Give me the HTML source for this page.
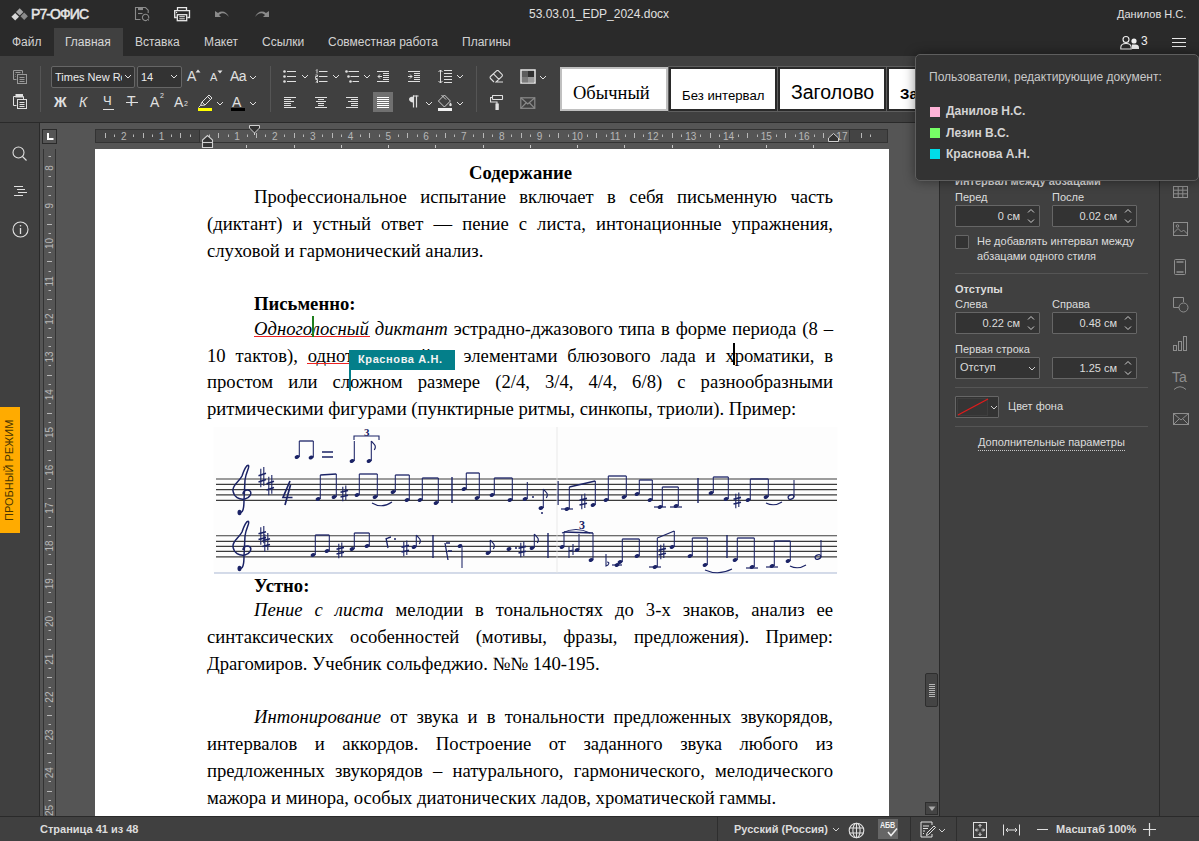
<!DOCTYPE html>
<html><head><meta charset="utf-8">
<style>
*{box-sizing:border-box;margin:0;padding:0}
html,body{width:1199px;height:841px;overflow:hidden;background:#555;font-family:"Liberation Sans",sans-serif;}
.abs{position:absolute}
#hdr{position:absolute;left:0;top:0;width:1199px;height:56px;background:#2a2a2a}
#tb{position:absolute;left:0;top:56px;width:1199px;height:67px;background:#404040;border-bottom:1px solid #2a2a2a}
#lside{position:absolute;left:0;top:123px;width:40px;height:694px;background:#404040;border-right:1px solid #2a2a2a}
#canvas{position:absolute;left:40px;top:123px;width:899px;height:694px;background:#555}
#rpanel{position:absolute;left:939px;top:123px;width:220px;height:694px;background:#404040;border-left:1px solid #2a2a2a}
#rpanel>*{margin-left:-1px}
#rside{position:absolute;left:1159px;top:123px;width:40px;height:694px;background:#404040;border-left:1px solid #2a2a2a}
#rside>*{margin-left:-1px}
#status{position:absolute;left:0;top:816px;width:1199px;height:25px;background:#404040;border-top:1px solid #2a2a2a}
#page{position:absolute;left:95px;top:149px;width:794px;height:667px;background:#fff;overflow:hidden}
.t{position:absolute;white-space:nowrap}
.ht{color:rgba(255,255,255,.8);font-size:12px}
.doc{font-family:"Liberation Serif",serif;font-size:18.67px;color:#000;position:absolute;white-space:nowrap;line-height:27px}
.j{text-align:justify;text-align-last:justify;width:626px;white-space:normal}
</style></head><body>
<div id="hdr">
<svg class="abs" style="left:0;top:0" width="30" height="28" viewBox="0 0 30 28">
<path d="M19.7 8.2l3.7 3.7l-3.7 3.7l-3.7-3.7z" fill="#a8a8a8"/>
<path d="M15.2 13l3.8 3.8l-3.8 3.8l-3.8-3.8z" fill="#d8d8d8"/>
<path d="M24.2 12.6l3.7 3.7l-3.7 3.7l-3.7-3.7z" fill="#8a8a8a"/>
</svg>
<div class="t" style="left:31px;top:6px;font-size:14px;color:#e6e6e6;letter-spacing:-0.9px;-webkit-text-stroke:0.5px #e6e6e6">Р7-ОФИС</div>
<svg class="abs" style="left:130px;top:4px" width="22" height="20" viewBox="130 4 22 20" fill="none" stroke="#8a8a8a" stroke-width="1.1">
<path d="M140.5 19.5H135.5V7.5H145.5L148.2 10.2V13"/><path d="M138 13.5H142.5"/><rect x="138" y="7.5" width="5" height="2.6" fill="#8a8a8a" stroke="none"/>
<path d="M148.6 18.5A3.2 3.2 0 1 0 147 20.3"/><path d="M146.5 19.5L149 21L148.5 18.5z" fill="#8a8a8a" stroke="none"/>
</svg>
<svg class="abs" style="left:172px;top:5px" width="20" height="18" viewBox="172 5 20 18" fill="none" stroke="#e8e8e8" stroke-width="1.3">
<path d="M177.5 10.2V7.7H186.5V10.2"/><path d="M176.8 17.5H174.7V10.7H189.5V17.5H187.3"/><rect x="177.3" y="14.7" width="9.4" height="6" fill="#2a2a2a"/><path d="M179.3 16.7H184.8M179.3 18.8H184.8" stroke-width="1"/><circle cx="176.6" cy="12.5" r="0.7" fill="#e8e8e8" stroke="none"/>
</svg>
<svg class="abs" style="left:214px;top:10px" width="16" height="9" viewBox="0 0 16 9"><path d="M1 1v6h6L5 5c3-3 7-2 10 2c-2-5-7-7-11-4z" fill="#8a8a8a"/></svg>
<svg class="abs" style="left:254px;top:10px" width="16" height="9" viewBox="0 0 16 9"><path d="M15 1v6H9l2-2C8 2 4 3 1 7c2-5 7-7 11-4z" fill="#8a8a8a"/></svg>
<div class="t ht" style="left:529px;top:7px;color:#e0e0e0">53.03.01_EDP_2024.docx</div>
<div class="t ht" style="left:1117px;top:8px;font-size:11px;color:#e0e0e0">Данилов Н.С.</div>
<div class="abs" style="left:54px;top:28px;width:69px;height:28px;background:#404040"></div>
<div class="t ht" style="left:12px;top:35px">Файл</div>
<div class="t ht" style="left:65px;top:35px">Главная</div>
<div class="t ht" style="left:135px;top:35px">Вставка</div>
<div class="t ht" style="left:204px;top:35px">Макет</div>
<div class="t ht" style="left:262px;top:35px">Ссылки</div>
<div class="t ht" style="left:328px;top:35px">Совместная работа</div>
<div class="t ht" style="left:462px;top:35px">Плагины</div>
<svg class="abs" style="left:1120px;top:35px" width="20" height="15" viewBox="0 0 20 15">
<circle cx="6" cy="4.5" r="3" fill="none" stroke="#f0f0f0" stroke-width="1.1"/>
<path d="M0.8 14v-1.5c0-2.5 2.3-4 5.2-4s5.2 1.5 5.2 4V14z" fill="none" stroke="#f0f0f0" stroke-width="1.1"/>
<circle cx="14" cy="6" r="2.6" fill="#f0f0f0"/>
<path d="M12 14V9.5h3.5c2 0 3.5 1.2 3.5 3V14z" fill="#f0f0f0"/>
</svg>
<div class="t ht" style="left:1141px;top:34px;color:#f0f0f0">3</div>
<svg class="abs" style="left:1172px;top:37px" width="15" height="11" viewBox="0 0 15 11"><path d="M0 1.5h14M0 5.5h14M0 9.5h14" stroke="#e8e8e8" stroke-width="1.2"/></svg>
</div>
<div id="tb">
<svg class="abs" style="left:13px;top:14px" width="15" height="14" viewBox="0 0 15 14" fill="none" stroke="#9a9a9a" stroke-width="1">
<path d="M3.5 9.5H0.5V0.5H9.5V3.5"/><path d="M2.5 2.5H7.5M2.5 4.5H3M2.5 6.5H3"/><rect x="4.5" y="4.5" width="9" height="9" fill="#404040"/><path d="M6.5 7.5H11.5M6.5 9.5H11.5M6.5 11.5H11.5"/>
</svg>
<svg class="abs" style="left:13px;top:38px" width="15" height="16" viewBox="0 0 15 16" fill="none" stroke="#e0e0e0" stroke-width="1">
<path d="M3 2.5H0.5V11.5H3.5"/><path d="M10.5 5.5V2.5H9.5"/><rect x="3" y="0.5" width="6.5" height="2.5" fill="#e0e0e0"/><rect x="4.5" y="5.5" width="9" height="9" fill="#404040"/><path d="M6.5 8.5H11.5M6.5 10.5H11.5M6.5 12.5H11.5"/>
</svg>
<div class="abs" style="left:40px;top:10px;width:1px;height:46px;background:#555"></div>
<div class="abs" style="left:51px;top:10px;width:84px;height:22px;background:#333;border:1px solid #666;border-radius:2px;overflow:hidden"><div class="t" style="left:3px;top:4px;font-size:11px;color:#ececec;width:67px;overflow:hidden">Times New Roman</div></div>
<svg class="abs" style="left:124px;top:18px" width="8" height="5" viewBox="0 0 8 5"><path d="M1 1l3 3l3-3" fill="none" stroke="#e0e0e0" stroke-width="1"/></svg>
<div class="abs" style="left:137px;top:10px;width:45px;height:22px;background:#333;border:1px solid #666;border-radius:2px"><div class="t" style="left:3px;top:4px;font-size:11px;color:#ececec">14</div></div>
<svg class="abs" style="left:170px;top:18px" width="8" height="5" viewBox="0 0 8 5"><path d="M1 1l3 3l3-3" fill="none" stroke="#e0e0e0" stroke-width="1"/></svg>
<div class="t" style="left:187px;top:12px;font-size:14px;color:#e0e0e0">A</div>
<svg class="abs" style="left:195px;top:13px" width="6" height="4"><path d="M0.5 3.5L3 0.5L5.5 3.5z" fill="#e0e0e0"/></svg>
<div class="t" style="left:210px;top:15px;font-size:11px;color:#e0e0e0">A</div>
<svg class="abs" style="left:217px;top:14px" width="6" height="4"><path d="M0.5 0.5L3 3.5L5.5 0.5z" fill="#e0e0e0"/></svg>
<div class="t" style="left:230px;top:12px;font-size:14px;color:#e0e0e0;letter-spacing:-0.5px">Aa</div>
<svg class="abs" style="left:249px;top:19px" width="8" height="5" viewBox="0 0 8 5"><path d="M1 1l3 3l3-3" fill="none" stroke="#e0e0e0" stroke-width="1"/></svg>
<div class="abs" style="left:270px;top:10px;width:1px;height:46px;background:#555"></div>
<div class="t" style="left:54px;top:38px;font-size:14px;font-weight:bold;color:#e0e0e0">Ж</div>
<div class="t" style="left:79px;top:38px;font-size:14px;font-style:italic;color:#e0e0e0">К</div>
<div class="t" style="left:103px;top:37px;font-size:13px;color:#e0e0e0">Ч</div>
<div class="abs" style="left:103px;top:53px;width:11px;height:1px;background:#e0e0e0"></div>
<div class="t" style="left:127px;top:37px;font-size:14px;color:#e0e0e0">Т</div>
<div class="abs" style="left:126px;top:46px;width:12px;height:1px;background:#e0e0e0"></div>
<div class="t" style="left:150px;top:38px;font-size:14px;color:#e0e0e0">A</div>
<div class="t" style="left:160px;top:36px;font-size:7px;color:#e0e0e0">2</div>
<div class="t" style="left:174px;top:38px;font-size:14px;color:#e0e0e0">A</div>
<div class="t" style="left:184px;top:44px;font-size:7px;color:#e0e0e0">2</div>
<svg class="abs" style="left:198px;top:37px" width="16" height="15" viewBox="0 0 16 15" fill="none" stroke="#e0e0e0" stroke-width="1">
<path d="M2.5 12.5L4 9L11 2l3 3l-7 7z M4 9l3 3 M9.5 3.5l3 3"/><path d="M0.5 14.5l2-2" />
</svg>
<div class="abs" style="left:198px;top:52px;width:14px;height:3px;background:#ffff00"></div>
<svg class="abs" style="left:216px;top:45px" width="8" height="5" viewBox="0 0 8 5"><path d="M1 1l3 3l3-3" fill="none" stroke="#e0e0e0" stroke-width="1"/></svg>
<div class="t" style="left:232px;top:38px;font-size:14px;color:#e0e0e0">A</div>
<div class="abs" style="left:231px;top:52px;width:14px;height:3px;background:#000"></div>
<svg class="abs" style="left:249px;top:45px" width="8" height="5" viewBox="0 0 8 5"><path d="M1 1l3 3l3-3" fill="none" stroke="#e0e0e0" stroke-width="1"/></svg>
<svg class="abs" style="left:283px;top:13px" width="16" height="14" viewBox="0 0 16 14" fill="none" stroke="#e0e0e0" stroke-width="1"><path d="M4 2.5H13M4 7.5H13M4 12.5H13"/><circle cx="1.5" cy="2.5" r="1.3" fill="#e0e0e0" stroke="none"/><circle cx="1.5" cy="7.5" r="1.3" fill="#e0e0e0" stroke="none"/><circle cx="1.5" cy="12.5" r="1.3" fill="#e0e0e0" stroke="none"/></svg><svg class="abs" style="left:301px;top:18px" width="8" height="5" viewBox="0 0 8 5"><path d="M1 1l3 3l3-3" fill="none" stroke="#e0e0e0" stroke-width="1"/></svg><svg class="abs" style="left:315px;top:13px" width="16" height="14" viewBox="0 0 16 14" fill="none" stroke="#e0e0e0" stroke-width="1"><path d="M4 2.5H12.5M4 7.5H12.5M4 12.5H12.5"/><path d="M1 1.5L2 0.5V4.5M0.5 6H2.5V7.5H0.5V9.5H2.5M0.5 10.5H2.5V14H0.5M1 12.3H2.5" stroke-width="0.9"/></svg><svg class="abs" style="left:332px;top:18px" width="8" height="5" viewBox="0 0 8 5"><path d="M1 1l3 3l3-3" fill="none" stroke="#e0e0e0" stroke-width="1"/></svg><svg class="abs" style="left:345px;top:13px" width="16" height="14" viewBox="0 0 16 14" fill="none" stroke="#e0e0e0" stroke-width="1"><path d="M3.5 2.5H14M5.5 7.5H14M7.5 12.5H14"/><circle cx="1.5" cy="2.5" r="1.3" fill="#e0e0e0" stroke="none"/><circle cx="3.5" cy="7.5" r="1.3" fill="#e0e0e0" stroke="none"/><circle cx="5.5" cy="12.5" r="1.3" fill="#e0e0e0" stroke="none"/></svg><svg class="abs" style="left:363px;top:18px" width="8" height="5" viewBox="0 0 8 5"><path d="M1 1l3 3l3-3" fill="none" stroke="#e0e0e0" stroke-width="1"/></svg><svg class="abs" style="left:377px;top:14px" width="14" height="13" viewBox="0 0 14 13" fill="none" stroke="#e0e0e0" stroke-width="1">
<path d="M0 1.5H12M6 3.5H12M6 5.5H12M6 7.5H12M6 9.5H12M0 11.5H12M1 6.5H5M3 4.5L1 6.5L3 8.5"/></svg>
<svg class="abs" style="left:408px;top:14px" width="14" height="13" viewBox="0 0 14 13" fill="none" stroke="#e0e0e0" stroke-width="1">
<path d="M0 1.5H12M6 3.5H12M6 5.5H12M6 7.5H12M6 9.5H12M0 11.5H12M0 6.5H4M2 4.5L4 6.5L2 8.5"/></svg>
<svg class="abs" style="left:438px;top:13px" width="15" height="15" viewBox="0 0 15 15" fill="none" stroke="#e0e0e0" stroke-width="1">
<path d="M2.5 1V14M0.5 3L2.5 1L4.5 3M0.5 12L2.5 14L4.5 12M6 1.5H14M6 4.5H14M6 7.5H14M6 10.5H14M6 13.5H14" /></svg>
<svg class="abs" style="left:456px;top:18px" width="8" height="5" viewBox="0 0 8 5"><path d="M1 1l3 3l3-3" fill="none" stroke="#e0e0e0" stroke-width="1"/></svg>
<div class="abs" style="left:373px;top:36px;width:20px;height:20px;background:#707070"></div><svg class="abs" style="left:284px;top:40px" width="13" height="13" viewBox="0 0 13 13" fill="none" stroke="#e0e0e0" stroke-width="1"><path d="M0 1.5H12M0 3.5H7M0 5.5H10M0 7.5H7M0 9.5H7M0 11.5H12"/></svg>
<svg class="abs" style="left:315px;top:40px" width="13" height="13" viewBox="0 0 13 13" fill="none" stroke="#e0e0e0" stroke-width="1"><path d="M0 1.5H12M3 3.5H9M1 5.5H11M3 7.5H9M3 9.5H9M0 11.5H12"/></svg>
<svg class="abs" style="left:346px;top:40px" width="13" height="13" viewBox="0 0 13 13" fill="none" stroke="#e0e0e0" stroke-width="1"><path d="M0 1.5H12M5 3.5H12M2 5.5H12M5 7.5H12M5 9.5H12M0 11.5H12"/></svg>
<svg class="abs" style="left:377px;top:40px" width="13" height="13" viewBox="0 0 13 13" fill="none" stroke="#fff" stroke-width="1"><path d="M0 1.5H12M0 3.5H12M0 5.5H12M0 7.5H12M0 9.5H12M0 11.5H12"/></svg>
<svg class="abs" style="left:408px;top:39px" width="11" height="13" viewBox="0 0 11 13"><path d="M5 0.5H10.5V1.5H5C3 1.5 1 2.5 1 4.3C1 6.2 3 7.5 5 7.5z" fill="#e0e0e0"/><path d="M5.5 0.5V12.5M8.5 0.5V12.5" stroke="#e0e0e0" stroke-width="1.2"/></svg>
<svg class="abs" style="left:425px;top:45px" width="8" height="5" viewBox="0 0 8 5"><path d="M1 1l3 3l3-3" fill="none" stroke="#e0e0e0" stroke-width="1"/></svg>
<svg class="abs" style="left:437px;top:38px" width="16" height="14" viewBox="0 0 16 14" fill="none" stroke="#e0e0e0" stroke-width="0.9"><path d="M7.4 1L13.4 7L7.4 13L1.4 7z"/><path d="M4.5 1L9 5.5"/><path d="M13.5 8.5c-1.6 1.8-1.8 3.5 0 3.8c1.8-0.3 1.6-2 0-3.8z" fill="#e0e0e0" stroke="none"/></svg>
<div class="abs" style="left:438px;top:52px;width:14px;height:3px;background:#f0f0f0"></div>
<svg class="abs" style="left:456px;top:45px" width="8" height="5" viewBox="0 0 8 5"><path d="M1 1l3 3l3-3" fill="none" stroke="#e0e0e0" stroke-width="1"/></svg>
<div class="abs" style="left:476px;top:10px;width:1px;height:46px;background:#555"></div>
<svg class="abs" style="left:489px;top:14px" width="15" height="13" viewBox="0 0 15 13" fill="none" stroke="#e0e0e0" stroke-width="1.1">
<path d="M5 12L1.5 8.5a1.4 1.4 0 0 1 0-2L7.5 0.8a1.4 1.4 0 0 1 2 0L13 4.3a1.4 1.4 0 0 1 0 2L7 12H14M4.5 3.8L10 9.3"/></svg>
<svg class="abs" style="left:520px;top:13px" width="16" height="15" viewBox="0 0 16 15">
<rect x="1" y="1" width="14" height="13" fill="none" stroke="#e8e8e8" stroke-width="1.5"/>
<rect x="2" y="2" width="6" height="6" fill="#5c5c5c"/><rect x="8" y="2" width="6" height="6" fill="#303030"/>
<rect x="2" y="8" width="6" height="5.5" fill="#7a7a7a"/><rect x="8" y="8" width="6" height="5.5" fill="#9a9a9a"/></svg>
<svg class="abs" style="left:539px;top:19px" width="8" height="5" viewBox="0 0 8 5"><path d="M1 1l3 3l3-3" fill="none" stroke="#e0e0e0" stroke-width="1"/></svg>
<svg class="abs" style="left:490px;top:39px" width="14" height="15" viewBox="0 0 14 15" fill="none" stroke="#e0e0e0" stroke-width="1.1">
<rect x="2.5" y="0.5" width="10" height="4" rx="0.5"/><path d="M2.5 2.5H0.5V7H7V9"/><rect x="6" y="9" width="2.2" height="5.5" fill="#e0e0e0"/></svg>
<svg class="abs" style="left:520px;top:41px" width="16" height="12" viewBox="0 0 16 12" fill="none" stroke="#8a8a8a" stroke-width="1.2">
<rect x="0.8" y="0.8" width="14" height="10.5"/><path d="M0.8 0.8L7.8 7L14.8 0.8M0.8 11.3L6 6M14.8 11.3L9.6 6"/></svg>
<div class="abs" style="left:560px;top:11px;width:108px;height:44px;background:#c0c0c0"></div>
<div class="abs" style="left:562px;top:13px;width:104px;height:40px;background:#fff;overflow:hidden"><div class="t" style="left:11px;top:14px;font-family:'Liberation Serif',serif;font-size:18.5px;color:#000">Обычный</div></div>
<div class="abs" style="left:668px;top:10px;width:330px;height:46px;background:#5e5e5e"></div>
<div class="abs" style="left:669px;top:11px;width:108px;height:44px;background:#2a2a2a"></div>
<div class="abs" style="left:778px;top:11px;width:108px;height:44px;background:#2a2a2a"></div>
<div class="abs" style="left:887px;top:11px;width:108px;height:44px;background:#2a2a2a"></div>
<div class="abs" style="left:671px;top:13px;width:104px;height:40px;background:#fff;overflow:hidden"><div class="t" style="left:11px;top:19px;font-size:13.2px;color:#000">Без интервал</div></div>
<div class="abs" style="left:780px;top:13px;width:104px;height:40px;background:#fff;overflow:hidden"><div class="t" style="left:11px;top:12px;font-size:19.5px;color:#000;width:83px;overflow:hidden">Заголовок 1</div></div>
<div class="abs" style="left:889px;top:13px;width:104px;height:40px;background:#fff;overflow:hidden"><div class="t" style="left:11px;top:15.7px;font-size:15px;font-weight:bold;color:#000">Заголовок 2</div></div>
</div>
<div id="lside">
<svg class="abs" style="left:11px;top:22px" width="18" height="18" viewBox="0 0 18 18" fill="none" stroke="#e0e0e0" stroke-width="1.1">
<circle cx="7.5" cy="7.5" r="5.5"/><path d="M11.5 11.5L15.5 15.5"/></svg>
<svg class="abs" style="left:12px;top:60px" width="16" height="14" viewBox="0 0 16 14" fill="none" stroke="#e0e0e0" stroke-width="1">
<path d="M2 3.5H11M5 6.5H13M6 9.5H15M2 12.5H11"/></svg>
<svg class="abs" style="left:11px;top:97px" width="19" height="19" viewBox="0 0 19 19" fill="none" stroke="#e0e0e0" stroke-width="1.1">
<circle cx="9.5" cy="9.5" r="7.5"/><path d="M9.5 8V14" stroke-width="1.3"/><circle cx="9.5" cy="5.8" r="0.8" fill="#e0e0e0" stroke="none"/></svg>
<div class="abs" style="left:0;top:284px;width:20px;height:126px;background:#ffab00"></div>
<div class="t" style="left:-41px;top:341px;width:100px;height:14px;font-size:11px;color:#4a3500;transform:rotate(-90deg);text-align:center;line-height:14px">ПРОБНЫЙ РЕЖИМ</div>
</div>
<div id="canvas">
<div class="abs" style="left:885px;top:550px;width:13px;height:34px;background:#444;border:1px solid #2e2e2e;border-radius:2px"></div>
<svg class="abs" style="left:889px;top:561px" width="6" height="14"><path d="M0 0.5H6M0 2.5H6M0 4.5H6M0 6.5H6M0 8.5H6M0 10.5H6M0 12.5H6" stroke="#b4b4b4" stroke-width="1"/></svg>
<div class="abs" style="left:885px;top:679px;width:13px;height:13px;background:#444;border:1px solid #2e2e2e"></div>
<svg class="abs" style="left:888px;top:683px" width="8" height="6"><path d="M0.5 0.5H7.5L4 5z" fill="#aaa"/></svg>
<div class="abs" style="left:2px;top:6px;width:15px;height:15px;border:1px solid #2a2a2a;background:#555"></div><svg class="abs" style="left:6px;top:10px" width="9" height="9"><path d="M2 0V6H7.5" fill="none" stroke="#fff" stroke-width="2"/></svg><div class="abs" style="left:55px;top:6px;width:793px;height:14px;background:#444;border:1px solid #333"></div><div class="abs" style="left:159px;top:7px;width:651px;height:12px;background:#555;border-left:1px solid #333;border-right:1px solid #333"></div><svg class="abs" style="left:0;top:0" width="899" height="40"><text x="83.7" y="17" font-family="Liberation Sans" font-size="10" fill="#b8b8b8" text-anchor="middle">2</text><text x="121.5" y="17" font-family="Liberation Sans" font-size="10" fill="#b8b8b8" text-anchor="middle">1</text><text x="197.1" y="17" font-family="Liberation Sans" font-size="10" fill="#b8b8b8" text-anchor="middle">1</text><text x="234.9" y="17" font-family="Liberation Sans" font-size="10" fill="#b8b8b8" text-anchor="middle">2</text><text x="272.7" y="17" font-family="Liberation Sans" font-size="10" fill="#b8b8b8" text-anchor="middle">3</text><text x="310.5" y="17" font-family="Liberation Sans" font-size="10" fill="#b8b8b8" text-anchor="middle">4</text><text x="348.3" y="17" font-family="Liberation Sans" font-size="10" fill="#b8b8b8" text-anchor="middle">5</text><text x="386.1" y="17" font-family="Liberation Sans" font-size="10" fill="#b8b8b8" text-anchor="middle">6</text><text x="423.9" y="17" font-family="Liberation Sans" font-size="10" fill="#b8b8b8" text-anchor="middle">7</text><text x="461.7" y="17" font-family="Liberation Sans" font-size="10" fill="#b8b8b8" text-anchor="middle">8</text><text x="499.5" y="17" font-family="Liberation Sans" font-size="10" fill="#b8b8b8" text-anchor="middle">9</text><text x="537.3" y="17" font-family="Liberation Sans" font-size="10" fill="#b8b8b8" text-anchor="middle">10</text><text x="575.1" y="17" font-family="Liberation Sans" font-size="10" fill="#b8b8b8" text-anchor="middle">11</text><text x="612.9" y="17" font-family="Liberation Sans" font-size="10" fill="#b8b8b8" text-anchor="middle">12</text><text x="650.7" y="17" font-family="Liberation Sans" font-size="10" fill="#b8b8b8" text-anchor="middle">13</text><text x="688.5" y="17" font-family="Liberation Sans" font-size="10" fill="#b8b8b8" text-anchor="middle">14</text><text x="726.3" y="17" font-family="Liberation Sans" font-size="10" fill="#b8b8b8" text-anchor="middle">15</text><text x="764.1" y="17" font-family="Liberation Sans" font-size="10" fill="#b8b8b8" text-anchor="middle">16</text><text x="801.9" y="17" font-family="Liberation Sans" font-size="10" fill="#b8b8b8" text-anchor="middle">17</text><path d="M65.5 10V15M74.5 11.5V14M93.5 11.5V14M103.5 10V15M112.5 11.5V14M131.5 11.5V14M140.5 10V15M150.5 11.5V14M169.5 11.5V14M178.5 10V15M188.5 11.5V14M207.5 11.5V14M216.5 10V15M225.5 11.5V14M244.5 11.5V14M254.5 10V15M263.5 11.5V14M282.5 11.5V14M292.5 10V15M301.5 11.5V14M320.5 11.5V14M329.5 10V15M339.5 11.5V14M358.5 11.5V14M367.5 10V15M377.5 11.5V14M396.5 11.5V14M405.5 10V15M414.5 11.5V14M433.5 11.5V14M443.5 10V15M452.5 11.5V14M471.5 11.5V14M481.5 10V15M490.5 11.5V14M509.5 11.5V14M518.5 10V15M528.5 11.5V14M547.5 11.5V14M556.5 10V15M566.5 11.5V14M585.5 11.5V14M594.5 10V15M603.5 11.5V14M622.5 11.5V14M632.5 10V15M641.5 11.5V14M660.5 11.5V14M670.5 10V15M679.5 11.5V14M698.5 11.5V14M707.5 10V15M717.5 11.5V14M736.5 11.5V14M745.5 10V15M755.5 11.5V14M774.5 11.5V14M783.5 10V15M792.5 11.5V14M821.5 10V15M830.5 11.5V14" stroke="#b8b8b8" stroke-width="1"/><path d="M206.5 22V25M254.5 22V25M301.5 22V25M348.5 22V25M395.5 22V25M443.5 22V25M490.5 22V25M537.5 22V25M584.5 22V25M632.5 22V25M679.5 22V25M726.5 22V25M773.5 22V25" stroke="#c8c8c8" stroke-width="1"/></svg><svg class="abs" style="left:161px;top:11px" width="13" height="15" viewBox="0 0 13 15"><path d="M1.5 13.5V6L6.5 1.5L11.5 6V13.5Z" fill="#333" stroke="#d0d0d0" stroke-width="1.1"/><path d="M1.5 8.5H11.5" stroke="#d0d0d0" stroke-width="1.1"/></svg><svg class="abs" style="left:209px;top:2px" width="11" height="11" viewBox="0 0 11 11"><path d="M0.5 0.5H10.5V3L5.5 8L0.5 3Z" fill="#333" stroke="#d0d0d0" stroke-width="1"/><path d="M5.5 8V10" stroke="#d0d0d0"/></svg><svg class="abs" style="left:788px;top:10px" width="11" height="9" viewBox="0 0 11 9"><path d="M0.5 8.5V5L5.5 0.5L10.5 5V8.5Z" fill="#333" stroke="#d0d0d0" stroke-width="1"/></svg><div class="abs" style="left:3px;top:26px;width:13px;height:700px;background:#555;border-left:1px solid #333;border-right:1px solid #333"></div><svg class="abs" style="left:0;top:0" width="40" height="693"><text x="0" y="0" transform="translate(13.0 44.9) rotate(-90)" font-family="Liberation Sans" font-size="10" fill="#b8b8b8" text-anchor="middle">8</text><text x="0" y="0" transform="translate(13.0 82.7) rotate(-90)" font-family="Liberation Sans" font-size="10" fill="#b8b8b8" text-anchor="middle">9</text><text x="0" y="0" transform="translate(13.0 120.5) rotate(-90)" font-family="Liberation Sans" font-size="10" fill="#b8b8b8" text-anchor="middle">10</text><text x="0" y="0" transform="translate(13.0 158.3) rotate(-90)" font-family="Liberation Sans" font-size="10" fill="#b8b8b8" text-anchor="middle">11</text><text x="0" y="0" transform="translate(13.0 196.1) rotate(-90)" font-family="Liberation Sans" font-size="10" fill="#b8b8b8" text-anchor="middle">12</text><text x="0" y="0" transform="translate(13.0 233.9) rotate(-90)" font-family="Liberation Sans" font-size="10" fill="#b8b8b8" text-anchor="middle">13</text><text x="0" y="0" transform="translate(13.0 271.7) rotate(-90)" font-family="Liberation Sans" font-size="10" fill="#b8b8b8" text-anchor="middle">14</text><text x="0" y="0" transform="translate(13.0 309.5) rotate(-90)" font-family="Liberation Sans" font-size="10" fill="#b8b8b8" text-anchor="middle">15</text><text x="0" y="0" transform="translate(13.0 347.3) rotate(-90)" font-family="Liberation Sans" font-size="10" fill="#b8b8b8" text-anchor="middle">16</text><text x="0" y="0" transform="translate(13.0 385.1) rotate(-90)" font-family="Liberation Sans" font-size="10" fill="#b8b8b8" text-anchor="middle">17</text><text x="0" y="0" transform="translate(13.0 422.9) rotate(-90)" font-family="Liberation Sans" font-size="10" fill="#b8b8b8" text-anchor="middle">18</text><text x="0" y="0" transform="translate(13.0 460.7) rotate(-90)" font-family="Liberation Sans" font-size="10" fill="#b8b8b8" text-anchor="middle">19</text><text x="0" y="0" transform="translate(13.0 498.5) rotate(-90)" font-family="Liberation Sans" font-size="10" fill="#b8b8b8" text-anchor="middle">20</text><text x="0" y="0" transform="translate(13.0 536.3) rotate(-90)" font-family="Liberation Sans" font-size="10" fill="#b8b8b8" text-anchor="middle">21</text><text x="0" y="0" transform="translate(13.0 574.1) rotate(-90)" font-family="Liberation Sans" font-size="10" fill="#b8b8b8" text-anchor="middle">22</text><text x="0" y="0" transform="translate(13.0 611.9) rotate(-90)" font-family="Liberation Sans" font-size="10" fill="#b8b8b8" text-anchor="middle">23</text><text x="0" y="0" transform="translate(13.0 649.7) rotate(-90)" font-family="Liberation Sans" font-size="10" fill="#b8b8b8" text-anchor="middle">24</text><text x="0" y="0" transform="translate(13.0 687.5) rotate(-90)" font-family="Liberation Sans" font-size="10" fill="#b8b8b8" text-anchor="middle">25</text><path d="M8.5 53.5H11M7 63.5H12M8.5 72.5H11M8.5 91.5H11M7 101.5H12M8.5 110.5H11M8.5 129.5H11M7 138.5H12M8.5 148.5H11M8.5 167.5H11M7 176.5H12M8.5 186.5H11M8.5 205.5H11M7 214.5H12M8.5 223.5H11M8.5 242.5H11M7 252.5H12M8.5 261.5H11M8.5 280.5H11M7 290.5H12M8.5 299.5H11M8.5 318.5H11M7 327.5H12M8.5 337.5H11M8.5 356.5H11M7 365.5H12M8.5 375.5H11M8.5 394.5H11M7 403.5H12M8.5 412.5H11M8.5 431.5H11M7 441.5H12M8.5 450.5H11M8.5 469.5H11M7 479.5H12M8.5 488.5H11M8.5 507.5H11M7 516.5H12M8.5 526.5H11M8.5 545.5H11M7 554.5H12M8.5 564.5H11M8.5 583.5H11M7 592.5H12M8.5 601.5H11M8.5 620.5H11M7 630.5H12M8.5 639.5H11M8.5 658.5H11M7 668.5H12M8.5 677.5H11M8.5 33.5H11" stroke="#b8b8b8" stroke-width="1"/></svg></div>
<div id="rpanel">
<div class="t" style="left:16px;top:51.8px;font-size:11px;font-weight:bold;color:#dcdcdc;">Интервал между абзацами</div>
<div class="t" style="left:16px;top:68.4px;font-size:11px;color:#dcdcdc;">Перед</div>
<div class="t" style="left:113px;top:68.4px;font-size:11px;color:#dcdcdc;">После</div>
<div class="abs" style="left:16px;top:82px;width:85px;height:22px;background:#333;border:1px solid #666;border-radius:1px"></div>
<div class="t" style="left:15px;top:87px;width:66px;text-align:right;font-size:11px;color:#dcdcdc">0 см</div>
<svg class="abs" style="left:88px;top:86px" width="8" height="14" viewBox="0 0 8 14"><path d="M1 3.5L4 0.5L7 3.5M1 10.5L4 13.5L7 10.5" fill="none" stroke="#d0d0d0" stroke-width="1"/></svg>
<div class="abs" style="left:113px;top:82px;width:85px;height:22px;background:#333;border:1px solid #666;border-radius:1px"></div>
<div class="t" style="left:112px;top:87px;width:66px;text-align:right;font-size:11px;color:#dcdcdc">0.02 см</div>
<svg class="abs" style="left:185px;top:86px" width="8" height="14" viewBox="0 0 8 14"><path d="M1 3.5L4 0.5L7 3.5M1 10.5L4 13.5L7 10.5" fill="none" stroke="#d0d0d0" stroke-width="1"/></svg>
<div class="abs" style="left:16px;top:112px;width:14px;height:14px;background:#333;border:1px solid #666;border-radius:1px"></div>
<div class="t" style="left:38px;top:112.4px;font-size:11px;color:#dcdcdc;">Не добавлять интервал между</div>
<div class="t" style="left:38px;top:127.1px;font-size:11px;color:#dcdcdc;">абзацами одного стиля</div>
<div class="abs" style="left:16px;top:150px;width:193px;height:1px;background:#555"></div>
<div class="t" style="left:16px;top:159.8px;font-size:11px;font-weight:bold;color:#dcdcdc;">Отступы</div>
<div class="t" style="left:16px;top:174.5px;font-size:11px;color:#dcdcdc;">Слева</div>
<div class="t" style="left:113px;top:174.5px;font-size:11px;color:#dcdcdc;">Справа</div>
<div class="abs" style="left:16px;top:189px;width:85px;height:22px;background:#333;border:1px solid #666;border-radius:1px"></div>
<div class="t" style="left:15px;top:194px;width:66px;text-align:right;font-size:11px;color:#dcdcdc">0.22 см</div>
<svg class="abs" style="left:88px;top:193px" width="8" height="14" viewBox="0 0 8 14"><path d="M1 3.5L4 0.5L7 3.5M1 10.5L4 13.5L7 10.5" fill="none" stroke="#d0d0d0" stroke-width="1"/></svg>
<div class="abs" style="left:113px;top:189px;width:85px;height:22px;background:#333;border:1px solid #666;border-radius:1px"></div>
<div class="t" style="left:112px;top:194px;width:66px;text-align:right;font-size:11px;color:#dcdcdc">0.48 см</div>
<svg class="abs" style="left:185px;top:193px" width="8" height="14" viewBox="0 0 8 14"><path d="M1 3.5L4 0.5L7 3.5M1 10.5L4 13.5L7 10.5" fill="none" stroke="#d0d0d0" stroke-width="1"/></svg>
<div class="t" style="left:16px;top:219.8px;font-size:11px;color:#dcdcdc;">Первая строка</div>
<div class="abs" style="left:16px;top:234px;width:85px;height:22px;background:#333;border:1px solid #666;border-radius:1px"></div>
<div class="t" style="left:21px;top:238.3px;font-size:11px;color:#dcdcdc;">Отступ</div>
<svg class="abs" style="left:89px;top:243px" width="8" height="5" viewBox="0 0 8 5"><path d="M1 1l3 3l3-3" fill="none" stroke="#d0d0d0" stroke-width="1"/></svg>
<div class="abs" style="left:113px;top:234px;width:85px;height:22px;background:#333;border:1px solid #666;border-radius:1px"></div>
<div class="t" style="left:112px;top:239px;width:66px;text-align:right;font-size:11px;color:#dcdcdc">1.25 см</div>
<svg class="abs" style="left:185px;top:238px" width="8" height="14" viewBox="0 0 8 14"><path d="M1 3.5L4 0.5L7 3.5M1 10.5L4 13.5L7 10.5" fill="none" stroke="#d0d0d0" stroke-width="1"/></svg>
<div class="abs" style="left:16px;top:264px;width:193px;height:1px;background:#555"></div>
<div class="abs" style="left:16px;top:273px;width:44px;height:22px;background:#333;border:1px solid #666;border-radius:1px"></div>
<svg class="abs" style="left:18px;top:275px" width="32" height="18" viewBox="0 0 32 18"><rect x="0.5" y="0.5" width="30" height="17" fill="#353535" stroke="#3e3e3e"/><path d="M1 17L31 1" stroke="#e01b1b" stroke-width="1.2"/></svg>
<svg class="abs" style="left:51px;top:282px" width="8" height="5" viewBox="0 0 8 5"><path d="M1 1l3 3l3-3" fill="none" stroke="#d0d0d0" stroke-width="1"/></svg>
<div class="t" style="left:69px;top:276.6px;font-size:11px;color:#dcdcdc;">Цвет фона</div>
<div class="abs" style="left:16px;top:303px;width:193px;height:1px;background:#555"></div>
<div class="t" style="left:39px;top:313.3px;font-size:11px;color:#dcdcdc;">Дополнительные параметры</div>
<div class="abs" style="left:39px;top:327px;width:147px;height:1px;border-top:1px dotted #c8c8c8"></div>
</div>
<div id="rside">
<svg class="abs" style="left:14px;top:63px" width="15" height="12" viewBox="0 0 15 12" fill="none" stroke="#8e8e8e" stroke-width="1"><rect x="0.5" y="0.5" width="14" height="11"/><path d="M0.5 4.2H14.5M0.5 7.8H14.5M5.2 0.5V11.5M9.8 0.5V11.5"/></svg>
<svg class="abs" style="left:14px;top:99px" width="15" height="14" viewBox="0 0 15 14" fill="none" stroke="#8e8e8e" stroke-width="1"><rect x="0.5" y="0.5" width="14" height="13"/><path d="M0.5 11L5 6.5L8.5 10L10.5 8L14.5 12"/><circle cx="4.5" cy="4" r="1.3"/></svg>
<svg class="abs" style="left:15px;top:136px" width="12" height="16" viewBox="0 0 12 16" fill="none" stroke="#8e8e8e" stroke-width="1"><rect x="0.5" y="0.5" width="11" height="15" rx="1"/><path d="M2.5 3H9.5M2.5 13H9.5" stroke-width="1.5"/></svg>
<svg class="abs" style="left:14px;top:174px" width="16" height="16" viewBox="0 0 16 16" fill="none" stroke="#8e8e8e" stroke-width="1"><path d="M6 10.5H0.5V0.5H10.5V5"/><circle cx="10.5" cy="10.5" r="4.5"/></svg>
<svg class="abs" style="left:14px;top:212px" width="14" height="16" viewBox="0 0 14 16" fill="none" stroke="#8e8e8e" stroke-width="1"><rect x="0.5" y="10.5" width="3" height="5"/><rect x="5.5" y="6.5" width="3" height="9"/><rect x="10.5" y="1.5" width="3" height="14"/></svg>
<div class="t" style="left:13px;top:246px;font-size:14px;color:#8e8e8e">Ta</div>
<svg class="abs" style="left:14px;top:262px" width="14" height="5" viewBox="0 0 14 5"><path d="M1 4.5Q7 -1 13 4.5" fill="none" stroke="#8e8e8e" stroke-width="1"/></svg>
<svg class="abs" style="left:14px;top:290px" width="16" height="12" viewBox="0 0 16 12" fill="none" stroke="#8e8e8e" stroke-width="1"><rect x="0.5" y="0.5" width="15" height="11"/><path d="M0.5 0.5L8 7L15.5 0.5M0.5 11.5L6 6M15.5 11.5L10 6"/></svg>
</div>
<div id="status">
<div class="t" style="left:40px;top:5.8px;font-size:11px;font-weight:bold;color:#dcdcdc">Страница 41 из 48</div>
<div class="abs" style="left:717px;top:0;width:1px;height:25px;background:#2e2e2e"></div>
<div class="t" style="left:734px;top:5.8px;font-size:11px;font-weight:bold;color:#dcdcdc">Русский (Россия)</div>
<svg class="abs" style="left:832px;top:10px" width="8" height="5" viewBox="0 0 8 5"><path d="M1 1l3 3l3-3" fill="none" stroke="#d0d0d0" stroke-width="1"/></svg>
<svg class="abs" style="left:848px;top:5px" width="17" height="17" viewBox="0 0 17 17" fill="none" stroke="#e0e0e0" stroke-width="1.1"><circle cx="8.5" cy="8.5" r="7.3"/><ellipse cx="8.5" cy="8.5" rx="3.6" ry="7.3"/><path d="M8.5 1.2V15.8M1.5 6H15.5M1.5 11H15.5"/></svg>
<div class="abs" style="left:878px;top:2px;width:20px;height:20px;background:#666"></div>
<div class="t" style="left:880px;top:3px;font-size:9.5px;font-weight:bold;color:#f0f0f0;letter-spacing:-0.2px;line-height:10px;transform:scaleX(0.75);transform-origin:0 0">АБВ</div>
<svg class="abs" style="left:887px;top:10px" width="11" height="10"><path d="M1 5L4 8.5L10 1.5" fill="none" stroke="#f0f0f0" stroke-width="1.5"/></svg>
<div class="abs" style="left:910px;top:0;width:1px;height:25px;background:#2e2e2e"></div>
<svg class="abs" style="left:920px;top:4px" width="16" height="17" viewBox="0 0 16 17" fill="none" stroke="#e0e0e0" stroke-width="1"><path d="M12 4V1H1V16H12V13"/><path d="M3 5H9M3 7.5H8M3 10H5M3 12.5H4"/><path d="M6.5 14.5L7 12L14 5L15.5 6.5L8.5 13.5Z"/></svg>
<svg class="abs" style="left:938px;top:11px" width="8" height="5" viewBox="0 0 8 5"><path d="M1 1l3 3l3-3" fill="none" stroke="#d0d0d0" stroke-width="1"/></svg>
<div class="abs" style="left:956px;top:0;width:1px;height:25px;background:#2e2e2e"></div>
<svg class="abs" style="left:972px;top:5px" width="16" height="17" viewBox="0 0 16 17" fill="none" stroke="#e0e0e0" stroke-width="1"><rect x="1.5" y="0.5" width="13" height="15"/><path d="M8 2.5V5.5M6.5 4L8 2.5L9.5 4M8 10.5V13.5M6.5 12L8 13.5L9.5 12M3.5 8H6.5M5 6.5L3.5 8L5 9.5M9.5 8H12.5M11 6.5L12.5 8L11 9.5"/></svg>
<svg class="abs" style="left:1002px;top:7px" width="19" height="12" viewBox="0 0 19 12" fill="none" stroke="#e0e0e0" stroke-width="1"><path d="M1.5 0.5V11.5M17.5 0.5V11.5M4 6H15M6 4L4 6L6 8M13 4L15 6L13 8"/></svg>
<div class="abs" style="left:1037px;top:12px;width:11px;height:1px;background:#e0e0e0"></div>
<div class="t" style="left:1056px;top:5.8px;font-size:11px;font-weight:bold;color:#dcdcdc">Масштаб 100%</div>
<svg class="abs" style="left:1143px;top:6px" width="13" height="13"><path d="M6.5 0V13M0 6.5H13" stroke="#e0e0e0" stroke-width="1.2"/></svg>
</div>
<div id="page">
<div class="doc" style="left:374px;top:9.8px;"><b>Содержание</b></div>
<div class="doc j" style="left:159px;top:34.2px;width:579px;">Профессиональное испытание включает в себя письменную часть</div>
<div class="doc j" style="left:112px;top:61.2px;width:626px;">(диктант) и устный ответ — пение с листа, интонационные упражнения,</div>
<div class="doc" style="left:112px;top:88.2px;">слуховой и гармонический анализ.</div>
<div class="doc" style="left:159px;top:141.2px;"><b>Письменно:</b></div>
<div class="doc j" style="left:159px;top:166.2px;width:579px;"><i>Одноголосный</i> <i>диктант</i> эстрадно-джазового типа в форме периода (8 –</div>
<div class="doc j" style="left:112px;top:193.2px;width:626px;">10 тактов), однотональный, с элементами блюзового лада и хроматики, в</div>
<div class="doc j" style="left:112px;top:219.2px;width:626px;">простом или сложном размере (2/4, 3/4, 4/4, 6/8) с разнообразными</div>
<div class="doc" style="left:112px;top:246.2px;">ритмическими фигурами (пунктирные ритмы, синкопы, триоли). Пример:</div>
<div class="doc" style="left:159px;top:422.7px;"><b>Устно:</b></div>
<div class="doc j" style="left:159px;top:447.2px;width:579px;"><i>Пение с листа</i> мелодии в тональностях до 3-х знаков, анализ ее</div>
<div class="doc j" style="left:112px;top:474.2px;width:626px;">синтаксических особенностей (мотивы, фразы, предложения). Пример:</div>
<div class="doc" style="left:112px;top:500.7px;">Драгомиров. Учебник сольфеджио. №№ 140-195.</div>
<div class="doc j" style="left:159px;top:554.2px;width:579px;"><i>Интонирование</i> от звука и в тональности предложенных звукорядов,</div>
<div class="doc j" style="left:112px;top:580.7px;width:626px;">интервалов и аккордов. Построение от заданного звука любого из</div>
<div class="doc j" style="left:112px;top:608.2px;width:626px;">предложенных звукорядов – натурального, гармонического, мелодического</div>
<div class="doc" style="left:112px;top:635.2px;">мажора и минора, особых диатонических ладов, хроматической гаммы.</div>
<div class="abs" style="left:159px;top:187px;width:116px;height:1px;background:#ee2222"></div>
<div class="abs" style="left:212px;top:214px;width:60px;height:1px;background:#ee2222"></div>
<div class="abs" style="left:217px;top:167px;width:2px;height:21px;background:#1e7e1e"></div>
<div class="abs" style="left:638px;top:194px;width:2px;height:22px;background:#000"></div>
<div class="abs" style="left:254px;top:201px;width:2px;height:41px;background:#047f8a"></div>
<div class="abs" style="left:254px;top:201px;width:106px;height:20px;background:#047f8a"></div>
<div class="t" style="left:263px;top:204px;font-size:11px;font-weight:bold;color:#f4f4f4;letter-spacing:0.6px">Краснова А.Н.</div>
<!--MUSIC--><svg class="abs" style="left:0;top:0" width="794" height="666" viewBox="95 149 794 666"><rect x="213.5" y="427" width="624" height="146" fill="#fdfdfd"/><path d="M214 573H837" stroke="#a9b7d4" stroke-width="1.2"/><ellipse cx="297" cy="457" rx="2.5" ry="1.8" transform="rotate(-25 297 457)" fill="#1b2366"/><ellipse cx="311" cy="457.5" rx="2.5" ry="1.8" transform="rotate(-25 311 457.5)" fill="#1b2366"/><path d="M299.3 457V441" stroke="#1b2366" stroke-width="1.05"/><path d="M313.3 457.5V441" stroke="#1b2366" stroke-width="1.05"/><path d="M299.3 441L313.3 441" stroke="#1b2366" stroke-width="1.3"/><path d="M322 452H333M322 457H333" stroke="#1b2366" stroke-width="1.4"/><ellipse cx="352" cy="461" rx="2.5" ry="1.8" transform="rotate(-25 352 461)" fill="#1b2366"/><path d="M354.3 461V441" stroke="#1b2366" stroke-width="1.05"/><ellipse cx="369" cy="461" rx="2.5" ry="1.8" transform="rotate(-25 369 461)" fill="#1b2366"/><path d="M371.3 461V441" stroke="#1b2366" stroke-width="1.05"/><path d="M371.3 441c2 3 6 4 3 9" fill="none" stroke="#1b2366" stroke-width="1.2"/><path d="M354 440V436H379V440" fill="none" stroke="#1b2366" stroke-width="1.1"/><text x="364" y="436" font-family="Liberation Serif" font-size="11" font-weight="bold" fill="#1b2366">3</text><path d="M216 479H837" stroke="#3c3c3c" stroke-width="1.15"/><path d="M216 484.3H837" stroke="#3c3c3c" stroke-width="1.15"/><path d="M216 489.6H837" stroke="#3c3c3c" stroke-width="1.15"/><path d="M216 494.9H837" stroke="#3c3c3c" stroke-width="1.15"/><path d="M216 500.4H837" stroke="#3c3c3c" stroke-width="1.15"/><path d="M216 535.7H837" stroke="#3c3c3c" stroke-width="1.15"/><path d="M216 541.4H837" stroke="#3c3c3c" stroke-width="1.15"/><path d="M216 546.4H837" stroke="#3c3c3c" stroke-width="1.15"/><path d="M216 551.4H837" stroke="#3c3c3c" stroke-width="1.15"/><path d="M216 556.9H837" stroke="#3c3c3c" stroke-width="1.15"/><g transform="translate(0 0)"><path d="M239 512 C243 514, 244 508, 244 500 L245 480 C246 472, 250 467, 248.5 465.5 C246.5 464.5, 244 470, 242 476 C239 482, 232 485, 233 491 C234 497, 239 500, 245 499 C250 498, 252 493, 250 491 C248 489, 243 490, 243 494" fill="none" stroke="#1b2366" stroke-width="1.5"/><ellipse cx="239.5" cy="512.5" rx="2" ry="2.8" fill="#1b2366"/></g><path d="M260.8 468.64V487.36M263.8 467.08V485.8" stroke="#1b2366" stroke-width="1.1" fill="none"/><path d="M258.5 475.66L266 473.32M258.5 481.9L266 479.56" stroke="#1b2366" stroke-width="1.6" fill="none"/><path d="M268.8 476.64V495.36M271.8 475.08V493.8" stroke="#1b2366" stroke-width="1.1" fill="none"/><path d="M266.5 483.66L274 481.32M266.5 489.9L274 487.56" stroke="#1b2366" stroke-width="1.6" fill="none"/><path d="M290 481L283 497.5H292.5M290.5 485L285 505" fill="none" stroke="#1b2366" stroke-width="1.7"/><ellipse cx="318" cy="499" rx="2.5" ry="1.8" transform="rotate(-25 318 499)" fill="#1b2366"/><ellipse cx="334" cy="497" rx="2.5" ry="1.8" transform="rotate(-25 334 497)" fill="#1b2366"/><path d="M320.3 499V475" stroke="#1b2366" stroke-width="1.05"/><path d="M336.3 497V474" stroke="#1b2366" stroke-width="1.05"/><path d="M320.3 475L336.3 474" stroke="#1b2366" stroke-width="1.3"/><path d="M342.8 486.8V501.2M345.8 485.6V500.0" stroke="#1b2366" stroke-width="1.1" fill="none"/><path d="M340.5 492.2L348 490.4M340.5 497.0L348 495.2" stroke="#1b2366" stroke-width="1.6" fill="none"/><ellipse cx="357" cy="495" rx="2.5" ry="1.8" transform="rotate(-25 357 495)" fill="#1b2366"/><ellipse cx="375" cy="497" rx="2.5" ry="1.8" transform="rotate(-25 375 497)" fill="#1b2366"/><path d="M359.3 495V474" stroke="#1b2366" stroke-width="1.05"/><path d="M377.3 497V474" stroke="#1b2366" stroke-width="1.05"/><path d="M359.3 474L377.3 474" stroke="#1b2366" stroke-width="1.3"/><path d="M372 503Q382.0 509 392 502" fill="none" stroke="#1b2366" stroke-width="1.1"/><ellipse cx="393" cy="492" rx="2.5" ry="1.8" transform="rotate(-25 393 492)" fill="#1b2366"/><ellipse cx="407" cy="500" rx="2.5" ry="1.8" transform="rotate(-25 407 500)" fill="#1b2366"/><path d="M395.3 492V475" stroke="#1b2366" stroke-width="1.05"/><path d="M409.3 500V475" stroke="#1b2366" stroke-width="1.05"/><path d="M395.3 475L409.3 475" stroke="#1b2366" stroke-width="1.3"/><ellipse cx="420" cy="500" rx="2.5" ry="1.8" transform="rotate(-25 420 500)" fill="#1b2366"/><ellipse cx="436" cy="503" rx="2.5" ry="1.8" transform="rotate(-25 436 503)" fill="#1b2366"/><path d="M422.3 500V478" stroke="#1b2366" stroke-width="1.05"/><path d="M438.3 503V478" stroke="#1b2366" stroke-width="1.05"/><path d="M422.3 478L438.3 478" stroke="#1b2366" stroke-width="1.3"/><path d="M452 477V503" stroke="#1b2366" stroke-width="1.4"/><ellipse cx="464" cy="489" rx="2.5" ry="1.8" transform="rotate(-25 464 489)" fill="#1b2366"/><ellipse cx="477" cy="498" rx="2.5" ry="1.8" transform="rotate(-25 477 498)" fill="#1b2366"/><path d="M466.3 489V473" stroke="#1b2366" stroke-width="1.05"/><path d="M479.3 498V473" stroke="#1b2366" stroke-width="1.05"/><path d="M466.3 473L479.3 473" stroke="#1b2366" stroke-width="1.3"/><ellipse cx="492" cy="495" rx="2.5" ry="1.8" transform="rotate(-25 492 495)" fill="#1b2366"/><ellipse cx="510" cy="500" rx="2.5" ry="1.8" transform="rotate(-25 510 500)" fill="#1b2366"/><path d="M494.3 495V478" stroke="#1b2366" stroke-width="1.05"/><path d="M512.3 500V478" stroke="#1b2366" stroke-width="1.05"/><path d="M494.3 478L512.3 478" stroke="#1b2366" stroke-width="1.3"/><ellipse cx="525" cy="499" rx="2.5" ry="1.8" transform="rotate(-25 525 499)" fill="#1b2366"/><path d="M527.3 499V482" stroke="#1b2366" stroke-width="1.05"/><circle cx="533" cy="497" r="1" fill="#1b2366"/><ellipse cx="541" cy="508" rx="2.5" ry="1.8" transform="rotate(-25 541 508)" fill="#1b2366"/><path d="M543.3 508V489" stroke="#1b2366" stroke-width="1.05"/><path d="M543.3 489c2 3 6 4 3 9" fill="none" stroke="#1b2366" stroke-width="1.2"/><circle cx="542" cy="513" r="1" fill="#1b2366"/><path d="M558 481V505" stroke="#1b2366" stroke-width="1.4"/><path d="M561.0 509H573.0" stroke="#1b2366" stroke-width="1.2"/><ellipse cx="567" cy="509" rx="2.5" ry="1.8" transform="rotate(-25 567 509)" fill="#1b2366"/><path d="M569.3 509V487" stroke="#1b2366" stroke-width="1.05"/><path d="M581.8 494.8V509.2M584.8 493.6V508.0" stroke="#1b2366" stroke-width="1.1" fill="none"/><path d="M579.5 500.2L587 498.4M579.5 505.0L587 503.2" stroke="#1b2366" stroke-width="1.6" fill="none"/><ellipse cx="593" cy="505" rx="2.5" ry="1.8" transform="rotate(-25 593 505)" fill="#1b2366"/><path d="M595.3 505V481" stroke="#1b2366" stroke-width="1.05"/><path d="M569.3 487L595.3 481" stroke="#1b2366" stroke-width="1.3"/><ellipse cx="606" cy="500" rx="2.5" ry="1.8" transform="rotate(-25 606 500)" fill="#1b2366"/><ellipse cx="624" cy="497" rx="2.5" ry="1.8" transform="rotate(-25 624 497)" fill="#1b2366"/><path d="M608.3 500V476" stroke="#1b2366" stroke-width="1.05"/><path d="M626.3 497V476" stroke="#1b2366" stroke-width="1.05"/><path d="M608.3 476L626.3 476" stroke="#1b2366" stroke-width="1.3"/><ellipse cx="637" cy="494" rx="2.5" ry="1.8" transform="rotate(-25 637 494)" fill="#1b2366"/><ellipse cx="650" cy="500" rx="2.5" ry="1.8" transform="rotate(-25 650 500)" fill="#1b2366"/><path d="M639.3 494V480" stroke="#1b2366" stroke-width="1.05"/><path d="M652.3 500V480" stroke="#1b2366" stroke-width="1.05"/><path d="M639.3 480L652.3 480" stroke="#1b2366" stroke-width="1.3"/><path d="M654.0 507H666.0" stroke="#1b2366" stroke-width="1.2"/><path d="M670.0 507H682.0" stroke="#1b2366" stroke-width="1.2"/><ellipse cx="660" cy="507" rx="2.5" ry="1.8" transform="rotate(-25 660 507)" fill="#1b2366"/><ellipse cx="676" cy="506" rx="2.5" ry="1.8" transform="rotate(-25 676 506)" fill="#1b2366"/><path d="M662.3 507V487" stroke="#1b2366" stroke-width="1.05"/><path d="M678.3 506V487" stroke="#1b2366" stroke-width="1.05"/><path d="M662.3 487L678.3 487" stroke="#1b2366" stroke-width="1.3"/><path d="M698 478V503" stroke="#1b2366" stroke-width="1.4"/><ellipse cx="711" cy="493" rx="2.5" ry="1.8" transform="rotate(-25 711 493)" fill="#1b2366"/><ellipse cx="726" cy="499" rx="2.5" ry="1.8" transform="rotate(-25 726 499)" fill="#1b2366"/><path d="M713.3 493V477" stroke="#1b2366" stroke-width="1.05"/><path d="M728.3 499V477" stroke="#1b2366" stroke-width="1.05"/><path d="M713.3 477L728.3 477" stroke="#1b2366" stroke-width="1.3"/><path d="M735.8 493.8V508.2M738.8 492.6V507.0" stroke="#1b2366" stroke-width="1.1" fill="none"/><path d="M733.5 499.2L741 497.4M733.5 504.0L741 502.2" stroke="#1b2366" stroke-width="1.6" fill="none"/><ellipse cx="748" cy="500" rx="2.5" ry="1.8" transform="rotate(-25 748 500)" fill="#1b2366"/><ellipse cx="766" cy="497" rx="2.5" ry="1.8" transform="rotate(-25 766 497)" fill="#1b2366"/><path d="M750.3 500V479" stroke="#1b2366" stroke-width="1.05"/><path d="M768.3 497V479" stroke="#1b2366" stroke-width="1.05"/><path d="M750.3 479L768.3 479" stroke="#1b2366" stroke-width="1.3"/><path d="M766 503Q774.0 507 782 502" fill="none" stroke="#1b2366" stroke-width="1.1"/><ellipse cx="791" cy="497" rx="3" ry="2.1" transform="rotate(-25 791 497)" fill="none" stroke="#1b2366" stroke-width="1.2"/><path d="M794 497V480" stroke="#1b2366" stroke-width="1.05"/><g transform="translate(0 56)"><path d="M239 512 C243 514, 244 508, 244 500 L245 480 C246 472, 250 467, 248.5 465.5 C246.5 464.5, 244 470, 242 476 C239 482, 232 485, 233 491 C234 497, 239 500, 245 499 C250 498, 252 493, 250 491 C248 489, 243 490, 243 494" fill="none" stroke="#1b2366" stroke-width="1.5"/><ellipse cx="239.5" cy="512.5" rx="2" ry="2.8" fill="#1b2366"/></g><path d="M260.8 527.36V544.64M263.8 525.92V543.2" stroke="#1b2366" stroke-width="1.1" fill="none"/><path d="M258.5 533.84L266 531.68M258.5 539.6L266 537.44" stroke="#1b2366" stroke-width="1.6" fill="none"/><path d="M264.8 534.36V551.64M267.8 532.92V550.2" stroke="#1b2366" stroke-width="1.1" fill="none"/><path d="M262.5 540.84L270 538.68M262.5 546.6L270 544.44" stroke="#1b2366" stroke-width="1.6" fill="none"/><ellipse cx="313" cy="555" rx="2.5" ry="1.8" transform="rotate(-25 313 555)" fill="#1b2366"/><ellipse cx="327" cy="551" rx="2.5" ry="1.8" transform="rotate(-25 327 551)" fill="#1b2366"/><path d="M315.3 555V535" stroke="#1b2366" stroke-width="1.05"/><path d="M329.3 551V535" stroke="#1b2366" stroke-width="1.05"/><path d="M315.3 535L329.3 535" stroke="#1b2366" stroke-width="1.3"/><path d="M338.8 543.8V558.2M341.8 542.6V557.0" stroke="#1b2366" stroke-width="1.1" fill="none"/><path d="M336.5 549.2L344 547.4M336.5 554.0L344 552.2" stroke="#1b2366" stroke-width="1.6" fill="none"/><ellipse cx="352" cy="549" rx="2.5" ry="1.8" transform="rotate(-25 352 549)" fill="#1b2366"/><ellipse cx="367" cy="546" rx="2.5" ry="1.8" transform="rotate(-25 367 546)" fill="#1b2366"/><path d="M354.3 549V533" stroke="#1b2366" stroke-width="1.05"/><path d="M369.3 546V533" stroke="#1b2366" stroke-width="1.05"/><path d="M354.3 533L369.3 533" stroke="#1b2366" stroke-width="1.3"/><path d="M386 538L388 548M386 539c2-1 4-2 5-2" fill="none" stroke="#1b2366" stroke-width="1.3"/><circle cx="395" cy="539" r="1" fill="#1b2366"/><path d="M403.8 541.8V556.2M406.8 540.6V555.0" stroke="#1b2366" stroke-width="1.1" fill="none"/><path d="M401.5 547.2L409 545.4M401.5 552.0L409 550.2" stroke="#1b2366" stroke-width="1.6" fill="none"/><ellipse cx="414" cy="547" rx="2.5" ry="1.8" transform="rotate(-25 414 547)" fill="#1b2366"/><path d="M416.3 547V535" stroke="#1b2366" stroke-width="1.05"/><path d="M416.3 535c2 3 6 4 3 9" fill="none" stroke="#1b2366" stroke-width="1.2"/><path d="M433 535V558" stroke="#1b2366" stroke-width="1.4"/><path d="M445 543L448 560M446 543h4M448 551h4" fill="none" stroke="#1b2366" stroke-width="1.3"/><ellipse cx="460" cy="546" rx="2.5" ry="1.8" transform="rotate(-25 460 546)" fill="#1b2366"/><path d="M462 546V568" stroke="#1b2366" stroke-width="1.05"/><ellipse cx="488" cy="553" rx="2.5" ry="1.8" transform="rotate(-25 488 553)" fill="#1b2366"/><path d="M490.3 553V540" stroke="#1b2366" stroke-width="1.05"/><path d="M490.3 540c2 3 6 4 3 9" fill="none" stroke="#1b2366" stroke-width="1.2"/><ellipse cx="509" cy="549" rx="2.5" ry="1.8" transform="rotate(-25 509 549)" fill="#1b2366"/><circle cx="516" cy="548" r="1" fill="#1b2366"/><path d="M520.8 542.8V557.2M523.8 541.6V556.0" stroke="#1b2366" stroke-width="1.1" fill="none"/><path d="M518.5 548.2L526 546.4M518.5 553.0L526 551.2" stroke="#1b2366" stroke-width="1.6" fill="none"/><ellipse cx="532" cy="548" rx="2.5" ry="1.8" transform="rotate(-25 532 548)" fill="#1b2366"/><path d="M534.3 548V534" stroke="#1b2366" stroke-width="1.05"/><path d="M534.3 534c2 3 6 4 3 9" fill="none" stroke="#1b2366" stroke-width="1.2"/><path d="M548 533V558" stroke="#1b2366" stroke-width="1.4"/><path d="M562 533Q576 526 590 533" fill="none" stroke="#1b2366" stroke-width="1.1"/><text x="579" y="529" font-family="Liberation Serif" font-size="12" font-weight="bold" fill="#1b2366">3</text><ellipse cx="562" cy="547" rx="2.5" ry="1.8" transform="rotate(-25 562 547)" fill="#1b2366"/><path d="M564 547V532" stroke="#1b2366" stroke-width="1.05"/><path d="M569 547V558M573 544V555M569 551L573 550" fill="none" stroke="#1b2366" stroke-width="1.1"/><ellipse cx="577" cy="550" rx="2.5" ry="1.8" transform="rotate(-25 577 550)" fill="#1b2366"/><path d="M579 550V534" stroke="#1b2366" stroke-width="1.05"/><ellipse cx="591" cy="560" rx="2.5" ry="1.8" transform="rotate(-25 591 560)" fill="#1b2366"/><path d="M593 560V533" stroke="#1b2366" stroke-width="1.05"/><path d="M564 532L593 533" stroke="#1b2366" stroke-width="1.3"/><path d="M606 554V566c3-1 4-4 1-4" fill="none" stroke="#1b2366" stroke-width="1.1"/><path d="M612.0 565H622.0" stroke="#1b2366" stroke-width="1.2"/><ellipse cx="617" cy="565" rx="2.5" ry="1.8" transform="rotate(-25 617 565)" fill="#1b2366"/><ellipse cx="620" cy="562" rx="2.5" ry="1.8" transform="rotate(-25 620 562)" fill="#1b2366"/><ellipse cx="637" cy="556" rx="2.5" ry="1.8" transform="rotate(-25 637 556)" fill="#1b2366"/><path d="M622.3 562V539" stroke="#1b2366" stroke-width="1.05"/><path d="M639.3 556V539" stroke="#1b2366" stroke-width="1.05"/><path d="M622.3 539L639.3 539" stroke="#1b2366" stroke-width="1.3"/><path d="M649.0 567H661.0" stroke="#1b2366" stroke-width="1.2"/><path d="M660.8 544.8V559.2M663.8 543.6V558.0" stroke="#1b2366" stroke-width="1.1" fill="none"/><path d="M658.5 550.2L666 548.4M658.5 555.0L666 553.2" stroke="#1b2366" stroke-width="1.6" fill="none"/><ellipse cx="655" cy="567" rx="2.5" ry="1.8" transform="rotate(-25 655 567)" fill="#1b2366"/><path d="M657.3 567V538" stroke="#1b2366" stroke-width="1.05"/><ellipse cx="672" cy="547" rx="2.5" ry="1.8" transform="rotate(-25 672 547)" fill="#1b2366"/><path d="M674.3 547V531" stroke="#1b2366" stroke-width="1.05"/><path d="M657.3 538L674.3 531" stroke="#1b2366" stroke-width="1.3"/><ellipse cx="690" cy="556" rx="2.5" ry="1.8" transform="rotate(-25 690 556)" fill="#1b2366"/><ellipse cx="705" cy="565" rx="2.5" ry="1.8" transform="rotate(-25 705 565)" fill="#1b2366"/><path d="M692.3 556V538" stroke="#1b2366" stroke-width="1.05"/><path d="M707.3 565V538" stroke="#1b2366" stroke-width="1.05"/><path d="M692.3 538L707.3 538" stroke="#1b2366" stroke-width="1.3"/><path d="M705 570Q718.5 576 732 569" fill="none" stroke="#1b2366" stroke-width="1.1"/><path d="M727 535V558" stroke="#1b2366" stroke-width="1.4"/><path d="M746.0 568H758.0" stroke="#1b2366" stroke-width="1.2"/><ellipse cx="735" cy="560" rx="2.5" ry="1.8" transform="rotate(-25 735 560)" fill="#1b2366"/><ellipse cx="752" cy="567" rx="2.5" ry="1.8" transform="rotate(-25 752 567)" fill="#1b2366"/><path d="M737.3 560V538" stroke="#1b2366" stroke-width="1.05"/><path d="M754.3 567V538" stroke="#1b2366" stroke-width="1.05"/><path d="M737.3 538L754.3 538" stroke="#1b2366" stroke-width="1.3"/><path d="M766.0 567H778.0" stroke="#1b2366" stroke-width="1.2"/><ellipse cx="772" cy="566" rx="2.5" ry="1.8" transform="rotate(-25 772 566)" fill="#1b2366"/><ellipse cx="788" cy="561" rx="2.5" ry="1.8" transform="rotate(-25 788 561)" fill="#1b2366"/><path d="M774.3 566V541" stroke="#1b2366" stroke-width="1.05"/><path d="M790.3 561V541" stroke="#1b2366" stroke-width="1.05"/><path d="M774.3 541L790.3 541" stroke="#1b2366" stroke-width="1.3"/><path d="M790 566Q798.0 570 806 565" fill="none" stroke="#1b2366" stroke-width="1.1"/><ellipse cx="818" cy="557" rx="3" ry="2.1" transform="rotate(-25 818 557)" fill="none" stroke="#1b2366" stroke-width="1.2"/><path d="M821 557V540" stroke="#1b2366" stroke-width="1.05"/><path d="M557 427V573" stroke="#e4e4e4" stroke-width="1.5" opacity="0.5"/></svg><!--/MUSIC-->
</div>
<div class="abs" style="left:915px;top:54px;width:284px;height:127px;background:#333;border:1px solid #5e5e5e;border-radius:5px;box-shadow:0 0 12px rgba(0,0,0,0.45)">
<div class="t" style="left:13px;top:14.7px;font-size:12px;color:#c8c8c8">Пользователи, редактирующие документ:</div>
<div class="abs" style="left:14px;top:52px;width:10px;height:10px;background:#ffb3d7"></div>
<div class="t" style="left:30px;top:49.4px;font-size:12px;font-weight:bold;color:#d4d4d4">Данилов Н.С.</div>
<div class="abs" style="left:14px;top:73px;width:10px;height:10px;background:#77ff66"></div>
<div class="t" style="left:30px;top:70.9px;font-size:12px;font-weight:bold;color:#d4d4d4">Лезин В.С.</div>
<div class="abs" style="left:14px;top:94px;width:10px;height:10px;background:#00dde8"></div>
<div class="t" style="left:30px;top:91.8px;font-size:12px;font-weight:bold;color:#d4d4d4">Краснова А.Н.</div>
</div>
</body></html>
